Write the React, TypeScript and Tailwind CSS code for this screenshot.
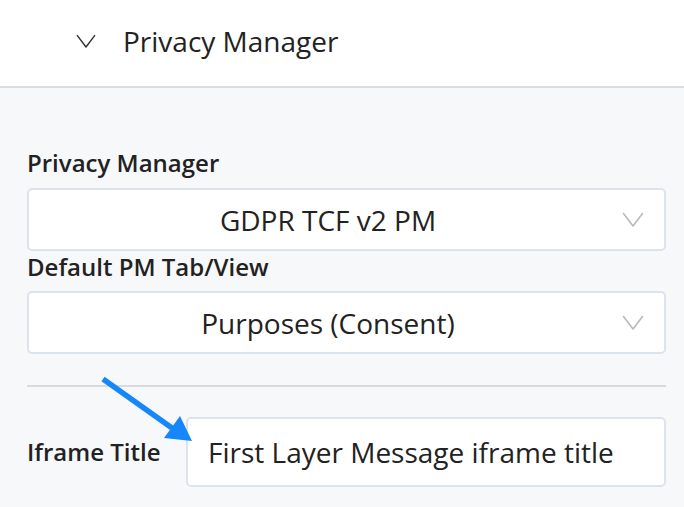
import React from "react";

const Chevron = ({ className, color }: { className?: string; color: string }) => (
  <svg className={className} width="22" height="16" viewBox="0 0 22 16" fill="none">
    <path d="M1.5 1.5 L11 14 L20.5 1.5" stroke={color} strokeWidth="1.6" strokeLinecap="round" strokeLinejoin="round" />
  </svg>
);

const Select = ({ value }: { value: string }) => (
  <div className="flex items-center h-[63px] bg-white border-2 border-[#dbe3ec] rounded-[5px] pl-[17px] pr-[20px]">
    <div className="flex-1 text-center text-[28px] text-[#222]">{value}</div>
    <Chevron color="#b9b9b9" className="ml-[12px]" />
  </div>
);

export default function App() {
  return (
    <div className="w-[684px] h-[507px] overflow-hidden bg-[#f7f8fa] relative" style={{ fontFamily: '"Open Sans", sans-serif' }}>
      <div className="h-[88px] bg-white border-b-2 border-[#dcdcdc] flex items-start pt-[22px]">
        <Chevron color="#333" className="ml-[76px] mt-[12px] w-[20px] h-[15px]" />
        <div className="ml-[27px] text-[28px] leading-[38px] text-[#222]">Privacy Manager</div>
      </div>
      <div className="pl-[27px] pr-[18px] pt-[59px]">
        <div className="text-[24px] leading-[32px] font-semibold text-[#222]">Privacy Manager</div>
        <div className="mt-[9px]">
          <Select value="GDPR TCF v2 PM" />
        </div>
        <div className="text-[24px] leading-[32px] font-semibold text-[#222]">Default PM Tab/View</div>
        <div className="mt-[8px]">
          <Select value="Purposes (Consent)" />
        </div>
        <div className="h-[2px] bg-[#d9dadc] mt-[31px]" />
        <div className="flex items-center mt-[30px]">
          <div className="w-[159px] text-[24px] font-semibold text-[#222]">Iframe Title</div>
          <div className="flex-1 h-[70px] bg-white border-2 border-[#dbe3ec] rounded-[5px] flex items-center pl-[20px] text-[28px] text-[#222]">
            First Layer Message iframe title
          </div>
        </div>
      </div>
      <svg className="absolute left-0 top-0 pointer-events-none" width="684" height="507" viewBox="0 0 684 507">
        <line x1="103" y1="379" x2="172" y2="428" stroke="#1687fa" strokeWidth="5.5" strokeLinecap="butt" />
        <polygon points="192,441 164,438 180,416" fill="#1687fa" />
      </svg>
    </div>
  );
}
